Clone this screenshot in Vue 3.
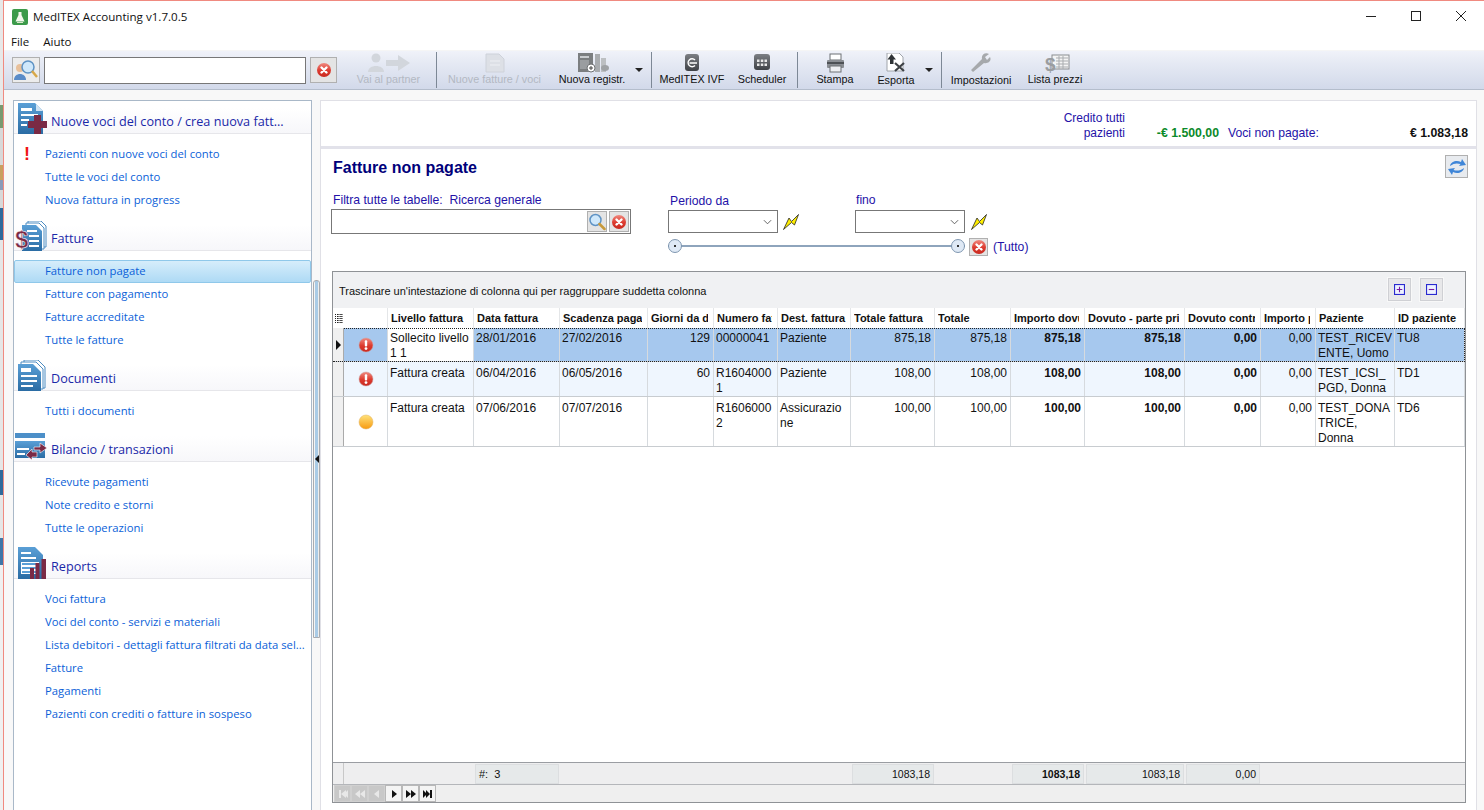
<script setup>
const tools = [
  { type: 'btn', id: 'i-partner', label: 'Vai al partner', w: 95, ml: 4, off: true },
  { type: 'sep' },
  { type: 'btn', id: 'i-newdoc', label: 'Nuove fatture / voci', w: 115, off: true },
  { type: 'btn', id: 'i-reg', label: 'Nuova registr.', w: 80 },
  { type: 'drop', w: 19 },
  { type: 'sep' },
  { type: 'btn', id: 'i-ivf', label: 'MedITEX IVF', w: 80 },
  { type: 'btn', id: 'i-sched', label: 'Scheduler', w: 60 },
  { type: 'sep', ml: 5 },
  { type: 'btn', id: 'i-print', label: 'Stampa', w: 74 },
  { type: 'btn', id: 'i-export', label: 'Esporta', w: 48, low: true },
  { type: 'drop', w: 19, ml: 2 },
  { type: 'sep' },
  { type: 'btn', id: 'i-wrench', label: 'Impostazioni', w: 78, low: true },
  { type: 'btn', id: 'i-price', label: 'Lista prezzi', w: 70 },
]
const sections = [
  { title: 'Nuove voci del conto / crea nuova fatt...', icon: 'i-s-new', x: 4, y: -5, w: 29, h: 31,
    items: [{ t: 'Pazienti con nuove voci del conto', alert: true }, { t: 'Tutte le voci del conto' }, { t: 'Nuova fattura in progress' }] },
  { title: 'Fatture', icon: 'i-s-inv', x: 1, y: -4, w: 32, h: 30,
    items: [{ t: 'Fatture non pagate', sel: true }, { t: 'Fatture con pagamento' }, { t: 'Fatture accreditate' }, { t: 'Tutte le fatture' }] },
  { title: 'Documenti', icon: 'i-s-doc', x: 4, y: -5, w: 28, h: 31,
    items: [{ t: 'Tutti i documenti' }] },
  { title: 'Bilancio / transazioni', icon: 'i-s-bal', x: 1, y: -3, w: 32, h: 29,
    items: [{ t: 'Ricevute pagamenti' }, { t: 'Note credito e storni' }, { t: 'Tutte le operazioni' }] },
  { title: 'Reports', icon: 'i-s-rep', x: 4, y: -6, w: 29, h: 32,
    items: [{ t: 'Voci fattura' }, { t: 'Voci del conto - servizi e materiali' }, { t: 'Lista debitori - dettagli fattura filtrati da data sel...' }, { t: 'Fatture' }, { t: 'Pagamenti' }, { t: 'Pazienti con crediti o fatture in sospeso' }] },
]
const cols = [
  { h: 'Livello fattura' }, { h: 'Data fattura' }, { h: 'Scadenza pagamento' },
  { h: 'Giorni da data', r: 1 }, { h: 'Numero fattura' }, { h: 'Dest. fattura', full: 1 },
  { h: 'Totale fattura', r: 1 }, { h: 'Totale', r: 1 }, { h: 'Importo dovuto', r: 1, b: 1 },
  { h: 'Dovuto - parte privata', r: 1, b: 1 }, { h: 'Dovuto contraente', r: 1, b: 1 },
  { h: 'Importo pagato', r: 1 }, { h: 'Paziente', np: 1 }, { h: 'ID paziente' },
]
const rows = [
  { cls: 'sel', mark: 'i-err', cells: ['Sollecito livello 1 1', '28/01/2016', '27/02/2016', '129', '00000041', 'Paziente', '875,18', '875,18', '875,18', '875,18', '0,00', '0,00', 'TEST_RICEVENTE, Uomo', 'TU8'] },
  { cls: 'alt', mark: 'i-err', cells: ['Fattura creata', '06/04/2016', '06/05/2016', '60', 'R16040001', 'Paziente', '108,00', '108,00', '108,00', '108,00', '0,00', '0,00', 'TEST_ICSI_ PGD, Donna', 'TD1'] },
  { cls: 'tall', mark: 'i-warn', cells: ['Fattura creata', '07/06/2016', '07/07/2016', '', 'R16060002', 'Assicurazione', '100,00', '100,00', '100,00', '100,00', '0,00', '0,00', 'TEST_DONATRICE, Donna', 'TD6'] },
]
const totals = [
  null, { t: '#:  3', left: 1 }, null, null, null, null,
  { t: '1083,18' }, null, { t: '1083,18', b: 1 }, { t: '1083,18' }, { t: '0,00' }, null, null, null,
]
const nav = [
  { id: 'n-first', off: 1 }, { id: 'n-pp', off: 1 }, { id: 'n-prev', off: 1 },
  { id: 'n-next' }, { id: 'n-nn' }, { id: 'n-last' },
]
</script>

<template>
  <svg class="sprite" aria-hidden="true">
    <defs>
      <linearGradient id="g-blue" x1="0" y1="0" x2="0" y2="1"><stop offset="0" stop-color="#5a9fd6"/><stop offset="1" stop-color="#2a6ca4"/></linearGradient>
      <linearGradient id="g-red" x1="0" y1="0" x2="0" y2="1"><stop offset="0" stop-color="#f08a80"/><stop offset="0.55" stop-color="#dc3a2e"/><stop offset="1" stop-color="#c92a20"/></linearGradient>
      <linearGradient id="g-or" x1="0" y1="0" x2="0" y2="1"><stop offset="0" stop-color="#ffe27a"/><stop offset="1" stop-color="#f79a10"/></linearGradient>
      <linearGradient id="g-dark" x1="0" y1="0" x2="0" y2="1"><stop offset="0" stop-color="#7c7f84"/><stop offset="1" stop-color="#3e4146"/></linearGradient>
    </defs>
    <symbol id="i-s-new" viewBox="0 0 29 31">
      <path d="M0 0H17L25 8V31H0Z" fill="url(#g-blue)"/><path d="M18 1L25 8H18Z" fill="#cfe3f3"/>
      <path d="M3 5H14V8H3ZM3 11H20V13H3ZM3 16H11V18H3ZM3 21H9V23H3Z" fill="#fff"/>
      <path d="M16 12H23V18H29V25H23V31H16V25H10V18H16Z" fill="#7a2a45"/>
    </symbol>
    <symbol id="i-s-inv" viewBox="0 0 32 30">
      <path d="M13 0H26L31 5V26H13Z" fill="#fff" stroke="#4c8cc2"/><path d="M11 2H24L29 7V28H11Z" fill="#fff" stroke="#4c8cc2"/>
      <path d="M7 4H21L27 10V30H7Z" fill="url(#g-blue)"/>
      <path d="M12 9H22V11H12ZM14 14H24V16H14ZM14 19H24V21H14ZM14 24H24V26H14Z" fill="#fff"/>
      <text x="0" y="27" class="dollar">$</text>
    </symbol>
    <symbol id="i-s-doc" viewBox="0 0 28 31">
      <path d="M6 0H20L27 7V28H6Z" fill="#fff" stroke="#4c8cc2"/><path d="M3 2H18L25 9V29H3Z" fill="#fff" stroke="#4c8cc2"/>
      <path d="M0 4H15L23 12V31H0Z" fill="url(#g-blue)"/>
      <path d="M3 8H13V12H3ZM3 15H19V17H3ZM3 20H19V22H3ZM3 25H15V27H3Z" fill="#fff"/>
    </symbol>
    <symbol id="i-s-bal" viewBox="0 0 32 29">
      <rect x="0" y="0" width="30" height="5" fill="#4c8fc8"/>
      <path d="M0 8H30V25H0Z" fill="url(#g-blue)"/><path d="M2 15H14V17H2ZM2 20H10V22H2Z" fill="#fff"/>
      <path d="M19 14H25V10L32 15L25 20V17H19Z" fill="#7a2a45" stroke="#fff" stroke-width=".6"/>
      <path d="M22 19H17V16L11 22L17 27V24H22Z" fill="#7a2a45" stroke="#fff" stroke-width=".6"/>
    </symbol>
    <symbol id="i-s-rep" viewBox="0 0 29 32">
      <path d="M0 0H17L25 8V32H0Z" fill="url(#g-blue)"/>
      <path d="M3 5H13V7H3ZM3 10H18V12H3Z" fill="#fff"/>
      <path d="M3 15H21V27H3Z" fill="#fff"/><path d="M4 16H20V18H4ZM4 20H20V22H4ZM4 24H20V26H4Z" fill="#5a9fd6"/>
      <path d="M12 21H16V32H12ZM17.500 16H21.500V32H17.500ZM23.500 12H28V32H23.500Z" fill="#7a2a45"/>
    </symbol>
    <symbol id="i-x" viewBox="0 0 16 16">
      <circle cx="8" cy="8" r="7" fill="url(#g-red)"/>
      <path d="M5.500 5.500L10.500 10.500M10.500 5.500L5.500 10.500" stroke="#fff" stroke-width="2.400" stroke-linecap="round"/>
    </symbol>
    <symbol id="i-err" viewBox="0 0 16 16">
      <circle cx="8" cy="8" r="7" fill="url(#g-red)" stroke="#c8a0a0" stroke-width=".5"/>
      <rect x="6.800" y="3.200" width="2.400" height="6.200" rx="1" fill="#fff"/><circle cx="8" cy="11.600" r="1.400" fill="#fff"/>
    </symbol>
    <symbol id="i-warn" viewBox="0 0 16 16">
      <circle cx="8" cy="8" r="7" fill="url(#g-or)" stroke="#e0b060" stroke-width=".5"/>
    </symbol>
    <symbol id="i-search" viewBox="0 0 18 18">
      <circle cx="7.500" cy="7" r="5.500" fill="#cfe8fb" stroke="#5f93c4" stroke-width="1.500"/>
      <path d="M11.500 11L16.500 16" stroke="#c89a3c" stroke-width="2.500" stroke-linecap="round"/>
    </symbol>
    <symbol id="i-bolt" viewBox="0 0 16 16">
      <path d="M0.500 15.500L6 4L8.500 7.500L15.500 .5L11.500 11L8.500 8.500Z" fill="#ffee00" stroke="#222" stroke-width=".8"/>
    </symbol>
    <symbol id="i-partner" viewBox="0 0 46 20">
      <circle cx="10" cy="5" r="4.500" fill="#d2d6dc"/><path d="M2 19C2 11 18 11 18 19Z" fill="#d2d6dc"/>
      <path d="M20 7H32V2L44 10L32 18V13H20Z" fill="#d2d6dc"/>
    </symbol>
    <symbol id="i-newdoc" viewBox="0 0 46 20">
      <path d="M14 1H27L32 6V19H14Z" fill="#dde0e6" stroke="#ced2da"/><path d="M18 8H28M18 12H28" stroke="#eef0f4"/>
    </symbol>
    <symbol id="i-reg" viewBox="0 0 46 20">
      <rect x="9" y="0" width="15" height="19" fill="#7b7e80"/><rect x="11" y="3" width="9" height="2" fill="#c9cccf"/><rect x="11" y="7" width="9" height="9" fill="#9a9da0"/>
      <rect x="26" y="1" width="5" height="18" fill="#a9acaf"/><rect x="32" y="5" width="5" height="14" fill="#bcbfc2"/>
      <circle cx="22" cy="15" r="4" fill="#fff" stroke="#6f7274"/><path d="M20 15H24M22 13V17" stroke="#444"/>
      <ellipse cx="36" cy="15" rx="4" ry="3" fill="#9fa2a5"/>
    </symbol>
    <symbol id="i-ivf" viewBox="0 0 46 20">
      <rect x="16" y="1" width="14" height="17" rx="3" fill="url(#g-dark)"/>
      <path d="M26 7A4 4 0 1 0 26 12.500M20.500 10H28" stroke="#fff" stroke-width="1.400" fill="none"/>
    </symbol>
    <symbol id="i-sched" viewBox="0 0 46 20">
      <rect x="15" y="1" width="16" height="16" rx="3" fill="url(#g-dark)"/>
      <path d="M18 6.500H20.500V9H18ZM21.800 6.500H24.300V9H21.800ZM25.500 6.500H28V9H25.500ZM18 10.500H20.500V13H18ZM21.800 10.500H24.300V13H21.800ZM25.500 10.500H28V13H25.500Z" fill="#e8e8e8"/>
    </symbol>
    <symbol id="i-print" viewBox="0 0 46 20">
      <rect x="18" y="1" width="11" height="6" fill="#fff" stroke="#6c7075"/>
      <rect x="15" y="7" width="17" height="8" rx="1" fill="#8a8e93"/><rect x="15" y="9" width="17" height="2" fill="#4d5155"/>
      <rect x="18" y="13" width="11" height="6" fill="#eef0f3" stroke="#6c7075"/>
    </symbol>
    <symbol id="i-export" viewBox="0 0 46 20">
      <path d="M14 0H26L30 4V18H14Z" fill="#fff" stroke="#a0a4aa"/>
      <path d="M18.500 1L23 6.500H20.500V11H17V6.500H14.500Z" fill="#2f3336"/>
      <path d="M22 10L31 18M31 10L22 18" stroke="#3d4145" stroke-width="2.200"/>
    </symbol>
    <symbol id="i-wrench" viewBox="0 0 46 20">
      <path d="M15 19L13 17L24 6C23 2 27 -1 31 1L27 4L29 7L32 4C34 8 30 11 26 10Z" fill="#a6a9ac"/>
    </symbol>
    <symbol id="i-price" viewBox="0 0 46 20">
      <rect x="20" y="2" width="17" height="14" fill="#f4f4f4" stroke="#8a8d90"/>
      <path d="M24 5H36M24 8H36M24 11H36M24 14H36M27 3V16M31 3V16" stroke="#a9acaf"/>
      <text x="13" y="18" class="dollar-g">$</text>
    </symbol>
    <symbol id="n-first" viewBox="0 0 12 12"><path d="M2 2H4V10H2ZM9 2V10L4 6ZM11 2V10L7 6Z"/></symbol>
    <symbol id="n-pp" viewBox="0 0 12 12"><path d="M6 2V10L1 6ZM11 2V10L6 6Z"/></symbol>
    <symbol id="n-prev" viewBox="0 0 12 12"><path d="M8 2V10L3 6Z"/></symbol>
    <symbol id="n-next" viewBox="0 0 12 12"><path d="M4 2V10L9 6Z"/></symbol>
    <symbol id="n-nn" viewBox="0 0 12 12"><path d="M1 2V10L6 6ZM6 2V10L11 6Z"/></symbol>
    <symbol id="n-last" viewBox="0 0 12 12"><path d="M1 2V10L5 6ZM4 2V10L8 6ZM8 2H10V10H8Z"/></symbol>
  </svg>

  <div class="screen">
    <div class="desk"></div>
    <div class="win">
      <header class="title">
        <svg class="logo" viewBox="0 0 16 16">
          <rect width="16" height="16" rx="2" fill="#3c9a4a"/>
          <path d="M6.500 3H9.500V6L12.500 12.500H3.500L6.500 6Z" fill="#f4f7ee"/><rect x="5" y="13" width="6" height="1" fill="#d8e8c8"/>
        </svg>
        <span class="title-text">MedITEX Accounting v1.7.0.5</span>
        <div class="ctl">
          <svg viewBox="0 0 10 10"><path d="M0 5.500H10" stroke="#222" fill="none"/></svg>
          <svg viewBox="0 0 10 10"><rect x=".5" y=".5" width="9" height="9" stroke="#222" fill="none"/></svg>
          <svg viewBox="0 0 10 10"><path d="M0 0L10 10M10 0L0 10" stroke="#222" fill="none"/></svg>
        </div>
      </header>
      <nav class="menu"><span>File</span><span>Aiuto</span></nav>

      <div class="toolbar">
        <button class="sq sq-person">
          <svg viewBox="0 0 26 22" class="person"><circle cx="7" cy="9" r="4" fill="#e8c09a"/><path d="M1 21C1 13 13 13 13 21Z" fill="#5a8cc8"/><circle cx="15" cy="8" r="6" fill="#cfe8fb" stroke="#5f93c4" stroke-width="1.500"/><path d="M19 12L24 18" stroke="#d8a848" stroke-width="2.500"/></svg>
        </button>
        <div class="top-input"></div>
        <button class="sq sq-x"><svg class="ix"><use href="#i-x"/></svg></button>
        <template v-for="(t, i) in tools" :key="i">
          <span v-if="t.type === 'sep'" class="sep" :style="{ marginLeft: (t.ml || 0) + 'px' }"></span>
          <span v-else-if="t.type === 'drop'" class="drop" :style="{ width: t.w + 'px', marginLeft: (t.ml || 0) + 'px' }"><i></i></span>
          <div v-else class="tool" :class="{ off: t.off, low: t.low }" :style="{ width: t.w + 'px', marginLeft: (t.ml || 0) + 'px' }">
            <svg class="tool-ic"><use :href="'#' + t.id"/></svg>
            <span>{{ t.label }}</span>
          </div>
        </template>
      </div>

      <div class="body">
        <aside class="side">
          <section v-for="s in sections" :key="s.title" class="sec">
            <div class="sec-head">
              <svg class="sec-ic" :style="{ left: s.x + 'px', top: s.y + 'px', width: s.w + 'px', height: s.h + 'px' }"><use :href="'#' + s.icon"/></svg>
              <span>{{ s.title }}</span>
            </div>
            <ul>
              <li v-for="it in s.items" :key="it.t" :class="{ cur: it.sel }">
                <b v-if="it.alert" class="bang">!</b>
                {{ it.t }}
              </li>
            </ul>
          </section>
        </aside>
        <div class="split"><div class="thumb"></div><i class="chev"></i></div>

        <main class="main">
          <div class="summary">
            <div class="credit">Credito tutti<br>pazienti</div>
            <div class="green">-€ 1.500,00</div>
            <div class="unpaid">Voci non pagate:</div>
            <div class="amount">€ 1.083,18</div>
          </div>

          <div class="work">
            <div class="head-row">
              <h1>Fatture non pagate</h1>
              <button class="sq refresh">
                <svg viewBox="0 0 20 20"><path d="M3 9C4 4 10 3 14 5L15 2L19 8L12 9L13.500 7C10 6 7 6 3 9Z" fill="#3f86d8"/><path d="M17 11C16 16 10 17 6 15L5 18L1 12L8 11L6.500 13C10 14 13 14 17 11Z" fill="#3f86d8"/></svg>
              </button>
            </div>

            <div class="filters">
              <div class="f-general">
                <label>Filtra tutte le tabelle:&nbsp; Ricerca generale</label>
                <div class="f-input">
                  <button class="sq mini"><svg class="ix-s"><use href="#i-search"/></svg></button>
                  <button class="sq mini"><svg class="ix"><use href="#i-x"/></svg></button>
                </div>
              </div>
              <div class="f-period">
                <div class="dates">
                  <div class="date">
                    <label class="lab-a">Periodo da</label>
                    <div class="date-row">
                      <div class="combo"><svg viewBox="0 0 10 6"><path d="M1 1L5 5L9 1" fill="none" stroke="#555"/></svg></div>
                      <svg class="bolt"><use href="#i-bolt"/></svg>
                    </div>
                  </div>
                  <div class="date">
                    <label class="lab-b">fino</label>
                    <div class="date-row">
                      <div class="combo"><svg viewBox="0 0 10 6"><path d="M1 1L5 5L9 1" fill="none" stroke="#555"/></svg></div>
                      <svg class="bolt"><use href="#i-bolt"/></svg>
                    </div>
                  </div>
                </div>
                <div class="slider">
                  <div class="track"><i class="knob"></i><i class="knob"></i></div>
                  <button class="sq mini"><svg class="ix"><use href="#i-x"/></svg></button>
                  <span>(Tutto)</span>
                </div>
              </div>
            </div>

            <div class="grid">
              <div class="group">
                <span>Trascinare un'intestazione di colonna qui per raggruppare suddetta colonna</span>
                <div class="group-btns">
                  <button class="gb"><svg viewBox="0 0 10 10"><rect x=".5" y=".5" width="9" height="9" fill="#eef2ff" stroke="#2a2ad0"/><path d="M2.500 5H7.500M5 2.500V7.500" stroke="#7a1aa0"/></svg></button>
                  <button class="gb"><svg viewBox="0 0 10 10"><rect x=".5" y=".5" width="9" height="9" fill="#eef2ff" stroke="#2a2ad0"/><path d="M2.500 5H7.500" stroke="#7a1aa0"/></svg></button>
                </div>
              </div>
              <div class="tr th">
                <div class="ind-h"><svg viewBox="0 0 8 9"><path d="M0 .5H1M2 .5H8M0 2.500H1M2 2.500H8M0 4.500H1M2 4.500H8M0 6.500H1M2 6.500H8M0 8.500H1M2 8.500H8" stroke="#222" stroke-dasharray="1 .4"/></svg></div>
                <div class="c-h"></div>
                <div v-for="c in cols" :key="c.h" class="c-h" :class="{ full: c.full }"><span class="c-t">{{ c.h }}</span></div>
              </div>
              <div v-for="r in rows" :key="r.cells[0] + r.cells[1]" class="tr row" :class="r.cls">
                <div class="ind"><i v-if="r.cls === 'sel'"></i></div>
                <div class="c mark"><svg><use :href="'#' + r.mark"/></svg></div>
                <div v-for="(v, j) in r.cells" :key="j" class="c" :class="{ right: cols[j].r, bold: cols[j].b, first: j === 0, np: cols[j].np }">{{ v }}</div>
              </div>
              <div class="fill"></div>
              <div class="tr totals">
                <div class="ind-t"></div><div></div>
                <div v-for="(t, k) in totals" :key="k" class="t-cell">
                  <span v-if="t" :class="{ left: t.left, bold: t.b }">{{ t.t }}</span>
                </div>
              </div>
              <div class="pager">
                <button v-for="n in nav" :key="n.id" class="pg" :class="{ off: n.off }"><svg viewBox="0 0 12 12"><use :href="'#' + n.id"/></svg></button>
              </div>
            </div>
          </div>
        </main>
      </div>
    </div>
  </div>
</template>

<style scoped>
.sprite { position: absolute; width: 0; height: 0; overflow: hidden; }
.dollar { font: bold 24px "Liberation Sans", sans-serif; fill: #7a2a45; stroke: #fff; stroke-width: .5px; }
.dollar-g { font: bold 19px "Liberation Sans", sans-serif; fill: #9a9da0; }
.screen { display: flex; height: 810px; width: 1484px; overflow: hidden; font-family: "Liberation Sans", Arial, sans-serif; }
.desk { width: 3px; flex: none; background: linear-gradient(#e8e8e8 0 105px, #7a9a70 105px 128px, #d8d8d8 128px 165px, #c8a060 165px 180px, #8a9ab8 180px 190px, #d8d8d8 190px 208px, #2f6a9c 208px 240px, #e6e6e6 240px 470px, #2f6a9c 470px 495px, #e6e6e6 495px 538px, #3f76a8 538px 565px, #f0f0f0 565px); }
.win { flex: 1; min-width: 0; display: flex; flex-direction: column; border-left: 1px solid #f08a80; border-top: 1px solid #f08a80; background: #f8f8f8; }
.title { height: 32px; flex: none; display: flex; align-items: center; background: #fff; padding-left: 8px; }
.logo { width: 16px; height: 16px; margin-right: 5px; margin-top: -1px; }
.title-text { font: 11.600px "Open Sans", sans-serif; color: #111; margin-top: -2px; }
.ctl { margin-left: auto; display: flex; align-items: center; margin-right: 18px; gap: 35px; margin-top: -2px; }
.ctl svg { width: 10px; height: 10px; }
.menu { height: 17px; flex: none; background: #fff; display: flex; gap: 14px; padding-left: 7px; font: 11.500px/17px "Open Sans", sans-serif; color: #111; }
.toolbar { height: 40px; flex: none; display: flex; align-items: center; background: linear-gradient(#f0f2f9, #e6eaf4 30%, #d2d9ea); border-top: 1px solid #f5f5f5; border-bottom: 1px solid #b4bdcc; padding-left: 8px; box-sizing: border-box; }
.sq { padding: 0; display: flex; align-items: center; justify-content: center; background: #e4e4e4; border: 1px solid #b0b0b0; box-sizing: border-box; flex: none; }
.sq-person { width: 28px; height: 26px; background: #ececec; }
.person { width: 26px; height: 22px; }
.top-input { width: 262px; height: 27px; margin-left: 4px; background: #fff; border: 1px solid #777; box-sizing: border-box; flex: none; }
.sq-x { width: 27px; height: 26px; margin-left: 4px; }
.ix { width: 16px; height: 16px; display: block; }
.ix-s { width: 18px; height: 18px; display: block; }
.sep { width: 1px; height: 36px; background: #7d8896; flex: none; }
.tool { flex: none; display: flex; flex-direction: column; align-items: center; font-size: 10.800px; color: #111; height: 38px; justify-content: flex-start; white-space: nowrap; }
.tool-ic { width: 46px; height: 20px; margin-top: 2px; flex: none; }
.tool span { margin-top: 0; line-height: 13px; }
.tool.low span { margin-top: 1px; }
.tool.off { color: #b3b8c2; }
.drop { flex: none; height: 38px; position: relative; display: block; }
.drop i { position: absolute; left: 3px; top: 17px; border-left: 4px solid transparent; border-right: 4px solid transparent; border-top: 4px solid #222; }
.body { flex: 1; min-height: 0; display: flex; padding: 10px 7px 0 9px; }
.side { width: 299px; box-sizing: border-box; flex: none; background: #fff; border: 1px solid #a9b8c8; border-bottom: 0; padding-top: 7px; overflow: hidden; }
.sec-head { position: relative; height: 25px; border-bottom: 1px solid #e6e6ea; background: linear-gradient(#fff, #f7f7fa); display: flex; align-items: center; padding-left: 37px; font: 12.650px "Open Sans", sans-serif; color: #1a28a8; white-space: nowrap; }
.sec-head span { padding-top: 1px; }
.sec-ic { position: absolute; }
.sec ul { list-style: none; margin: 0; padding: 9px 0 13px; }
.sec li { position: relative; height: 23px; padding-left: 31px; font: 11.300px/22px "Open Sans", sans-serif; color: #0b5fd8; white-space: nowrap; box-sizing: border-box; }
.sec li.cur { background: linear-gradient(#d6edfb, #aedaf5); border: 1px solid #8fc8ea; border-radius: 2px; padding-left: 30px; line-height: 20px; }
.bang { position: absolute; left: 10px; top: 0; color: #f01414; font: bold 18px/22px "Liberation Sans", sans-serif; }
.split { width: 8px; flex: none; position: relative; }
.thumb { position: absolute; left: 1px; top: 180px; width: 7px; height: 358px; box-sizing: border-box; border: 1px solid #a8abb0; border-radius: 3px 3px 0 0; background: linear-gradient(90deg, #f4f4f4 0 30%, #a9cbe6 30% 80%, #eee 80%); }
.chev { position: absolute; left: 3px; top: 355px; border-top: 4px solid transparent; border-bottom: 4px solid transparent; border-right: 4px solid #111; }
.main { flex: 1; min-width: 0; display: flex; flex-direction: column; background: #fff; border: 1px solid #e0e0e6; border-bottom: 0; }
.summary { flex: none; display: flex; align-items: flex-end; justify-content: flex-end; padding: 0 8px 5px 0; font-size: 12px; line-height: 15px; color: #2412a8; border-bottom: 3px solid #e2e2ea; height: 40px; }
.credit { text-align: right; width: 100px; }
.green { width: 94px; text-align: right; color: #0a8a2a; font-weight: bold; font-size: 12.300px; }
.unpaid { width: 150px; margin-left: 9px; font-size: 12.200px; }
.amount { width: 90px; text-align: right; font-weight: bold; color: #111; font-size: 12.300px; }
.work { flex: 1; min-height: 0; display: flex; flex-direction: column; padding: 6px 8px 7px 10px; }
.head-row { display: flex; justify-content: space-between; align-items: center; height: 23px; flex: none; }
h1 { margin: 2px 0 0 2px; font: bold 16px "Liberation Sans", sans-serif; color: #00007a; }
.refresh { width: 23px; height: 23px; background: #e8ebef; }
.refresh svg { width: 20px; height: 20px; }
.filters { display: flex; height: 79px; flex: none; margin-top: 14px; color: #2412a8; font-size: 12.200px; }
.filters label { display: block; line-height: 16px; white-space: nowrap; }
.f-general { width: 337px; flex: none; }
.f-general label { margin-left: 2px; }
.f-input { width: 300px; height: 25px; margin-top: 1px; box-sizing: border-box; border: 1px solid #777; background: #fff; display: flex; justify-content: flex-end; align-items: center; gap: 2px; padding-right: 1px; }
.mini { width: 20px; height: 21px; }
.f-period { flex: none; }
.dates { display: flex; }
.date { width: 187px; }
.lab-a { margin: 1px 0 0 2px; }
.lab-b { margin-left: 1px; }
.date-row { display: flex; align-items: center; margin-top: 1px; }
.date:last-child .date-row { margin-top: 2px; }
.combo { width: 110px; height: 23px; box-sizing: border-box; border: 1px solid #777; background: #fff; display: flex; justify-content: flex-end; align-items: center; padding-right: 5px; }
.combo svg { width: 9px; height: 6px; }
.bolt { width: 16px; height: 16px; margin-left: 5px; }
.date:last-child .bolt { margin-left: 6px; }
.slider { display: flex; align-items: center; margin-top: 3px; }
.track { width: 297px; height: 2px; background: #8ea4bc; display: flex; justify-content: space-between; align-items: center; flex: none; }
.knob { width: 14px; height: 14px; box-sizing: border-box; border: 1px solid #7e96b0; border-radius: 50%; background: radial-gradient(circle, #333 0 1px, #dfe9f5 1.500px); flex: none; }
.slider .mini { margin: 2px 0 0 4px; width: 19px; height: 18px; }
.slider span { margin: 2px 0 0 5px; }
.grid { flex: 1; min-height: 0; display: flex; flex-direction: column; border: 1px solid #8f9296; font-size: 12px; color: #111; background: #fff; margin: 0 2px 0 1px; box-sizing: border-box; }
.group { height: 36px; flex: none; background: #f0f1f3; display: flex; align-items: center; justify-content: space-between; font-size: 11px; padding: 0 22px 0 6px; }
.group span { margin-top: 1px; }
.group-btns { display: flex; gap: 9px; margin-top: -2px; }
.gb { width: 23px; height: 23px; padding: 0; display: flex; align-items: center; justify-content: center; background: #e8e8ea; border: 1px solid #cfd0d4; outline: 1px solid #f8f8f8; }
.gb svg { width: 11px; height: 11px; }
.tr { display: grid; grid-template-columns: 11px 44px 86px 86px 88px 66px 64px 73px 84px 76px 74px 100px 76px 55px 79px 1fr; flex: none; box-sizing: border-box; }
.th { height: 20px; background: #fff; }
.c-h { font: bold 11px/20px "Liberation Sans", sans-serif; padding: 0 5px 0 3px; border-right: 1px solid #e4e6e8; min-width: 0; }
.c-h.full { padding-right: 2px; }
.c-t { display: block; overflow: hidden; white-space: nowrap; }
.ind-h { display: flex; align-items: center; justify-content: center; }
.ind-h svg { width: 8px; height: 9px; }
.row { border-bottom: 1px solid #c8ccd0; }
.sel { height: 34px; background: #a6c8ee; outline: 1px dotted #222; outline-offset: -1px; }
.alt { height: 35px; background: #eff6fe; }
.tall { height: 50px; background: #fff; }
.ind { background: #f0f0f0; border-right: 1px solid #aaa; position: relative; }
.ind i { position: absolute; left: 3px; top: 12px; border-top: 5px solid transparent; border-bottom: 5px solid transparent; border-left: 5px solid #111; }
.c { padding: 3px 3px 0 2px; line-height: 15px; overflow: hidden; overflow-wrap: anywhere; border-right: 1px solid #d6dade; min-width: 0; }
.alt .c, .tall .c { padding-top: 4px; }
.c.np { padding-right: 0; }
.sel .c.first { background: #fff; }
.right { text-align: right; }
.bold { font-weight: bold; }
.c.mark { display: flex; align-items: center; justify-content: center; padding: 0; }
.mark svg { width: 16px; height: 16px; }
.fill { flex: 1; }
.totals { height: 23px; background: #eeeeef; border-top: 1px solid #9a9da2; border-bottom: 1px solid #b4b6ba; align-items: center; }
.ind-t { height: 100%; border-right: 1px solid #c8c8c8; }
.t-cell { padding: 0 1px; min-width: 0; }
.t-cell span { display: block; height: 20px; line-height: 19px; background: #e6e9ea; border: 1px solid #dcdee0; text-align: right; padding: 0 3px; font-size: 10.500px; box-sizing: border-box; }
.t-cell span.left { text-align: left; font-size: 11px; white-space: pre; }
.t-cell span.bold { font-weight: bold; }
.pager { height: 17px; flex: none; background: #efefef; display: flex; padding-left: 1px; }
.pg { width: 17px; height: 17px; padding: 0; background: #f4f4f4; border: 1px solid #b8b8b8; display: flex; align-items: center; justify-content: center; box-sizing: border-box; }
.pg svg { width: 12px; height: 12px; fill: #111; }
.pg.off { background: #c8c8c8; border-color: #d0d0d0; }
.pg.off svg { fill: #e8e8e8; }
</style>
